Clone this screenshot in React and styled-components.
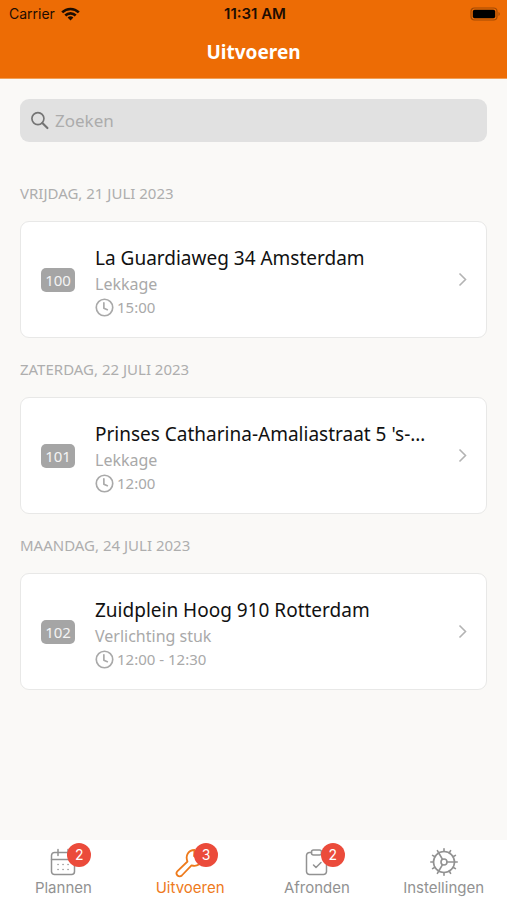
import React from 'react'
import styled, { createGlobalStyle } from 'styled-components'

const GlobalStyle = createGlobalStyle`
  * {
    box-sizing: border-box;
  }

  body {
    margin: 0;
    background: #faf9f7;
    font-family: "Noto Sans", "Open Sans", sans-serif;
  }
`;

const Screen = styled.div`
  display: flex;
  flex-direction: column;
  min-height: 100vh;
`;

const Header = styled.header`
  background: #ed6c05;
  border-bottom: 1px solid #f0a058;
`;

const StatusBar = styled.div`
  display: grid;
  grid-template-columns: 1fr auto 1fr;
  align-items: center;
  height: 27px;
  padding: 0 6px 0 9px;
  font-family: Inter, sans-serif;
  font-size: 14px;
  color: #1d0d02;
`;

const Carrier = styled.div`
  display: flex;
  align-items: center;
  gap: 6px;
`;

const Clock = styled.div`
  font-size: 15px;
  font-weight: 600;
`;

const Battery = styled.svg`
  justify-self: end;
`;

const Title = styled.h1`
  margin: 0;
  font-size: 19px;
  font-weight: 700;
  line-height: 51px;
  text-align: center;
  color: #fff;
`;

const Main = styled.main`
  flex: 1;
  padding: 20px;
`;

const SearchBox = styled.label`
  display: flex;
  align-items: center;
  gap: 6px;
  height: 43px;
  margin-bottom: 20px;
  padding: 0 10px;
  border-radius: 9px;
  background: #e1e1e1;
  color: #747474;
`;

const SearchInput = styled.input`
  flex: 1;
  min-width: 0;
  padding: 0;
  border: 0;
  outline: 0;
  background: none;
  font-family: inherit;
  font-size: 17px;
  color: #333;

  &::placeholder {
    color: #acacac;
    opacity: 1;
  }
`;

const DayTitle = styled.h2`
  margin: 0;
  padding: 21px 0 18px;
  font-size: 15px;
  font-weight: 400;
  line-height: 20px;
  text-transform: uppercase;
  color: #aeaeae;
`;

const Card = styled.a`
  display: flex;
  align-items: center;
  gap: 20px;
  padding: 18px 19px 18px 20px;
  border: 1px solid #e8e8e7;
  border-radius: 9px;
  background: #fff;
  text-decoration: none;
  color: #a9a9a9;
`;

const Number = styled.span`
  width: 34px;
  border-radius: 5px;
  background: #a5a5a5;
  font-size: 15px;
  line-height: 24px;
  text-align: center;
  color: #f4f4f4;
`;

const Details = styled.div`
  flex: 1;
  min-width: 0;
  padding-top: 4px;
`;

const Address = styled.div`
  font-size: 19px;
  line-height: 28px;
  color: #111;
`;

const Description = styled.div`
  font-size: 16px;
  line-height: 24px;
`;

const Time = styled.div`
  display: flex;
  align-items: center;
  gap: 3px;
  font-size: 15px;
  line-height: 23px;
`;

const TabBar = styled.nav`
  display: grid;
  grid-template-columns: repeat(4, 1fr);
  height: 60px;
  background: #fff;
`;

const Tab = styled.a`
  display: flex;
  flex-direction: column;
  align-items: center;
  padding-top: 8px;
  font-family: Inter, sans-serif;
  font-size: 15px;
  line-height: 20px;
  text-decoration: none;
  color: ${(props) => (props.$active ? '#ee7a1b' : '#929292')};
`;

const IconWrap = styled.span`
  position: relative;
  height: 30px;
`;

const Badge = styled.span`
  position: absolute;
  top: -5px;
  right: -13px;
  width: 24px;
  border-radius: 50%;
  background: #eb4b3b;
  font-size: 14px;
  line-height: 24px;
  text-align: center;
  color: #fff;
`;

const Icon = ({ size = 30, width = 1.5, children }) => (
  <svg
    width={size}
    height={size}
    viewBox="0 0 30 30"
    fill="none"
    stroke="currentColor"
    strokeWidth={width}
    strokeLinecap="round"
    strokeLinejoin="round"
    aria-hidden="true"
  >
    {children}
  </svg>
)

const CalendarIcon = () => (
  <Icon>
    <rect x="3.5" y="4.5" width="23" height="22" rx="3" />
    <path d="M3.5 11.5h23M10 1.500v6M20 1.500v6" />
    <path d="M10 16.5h.1M15 16.5h.1M20 16.5h.1M10 21.5h.1M15 21.5h.1M20 21.5h.1" />
  </Icon>
)

const WrenchIcon = () => (
  <Icon width={1.8}>
    <path d="M12.5 13.5 2.5 23.2a3 3 0 0 0 4.300 4.300L16.500 17.300c5.500 1.800 10.500-1.300 11-7L23 11l-4-3 .5-6c-6 0-9.500 5.500-7 11.500z" />
  </Icon>
)

const ClipboardIcon = () => (
  <Icon>
    <path d="M9.5 4.5h-2a3 3 0 0 0-3 3v16a3 3 0 0 0 3 3h14a3 3 0 0 0 3-3v-16a3 3 0 0 0-3-3h-2" />
    <rect x="9.5" y="2" width="10" height="5" rx="2" />
    <path d="m11.5 17 2.500 2.500 5-5" />
  </Icon>
)

const GearIcon = () => (
  <Icon width={1.6}>
    <circle cx="15" cy="14" r="10.5" />
    <circle cx="15" cy="14" r="3" />
    <path d="M18 14h7.500M13.500 11.400 9.800 5M13.500 16.600 9.800 23" />
    {[...Array(12)].map((_, i) => (
      <path key={i} d="M15 3.500V.8" transform={`rotate(${i * 30} 15 14)`} />
    ))}
  </Icon>
)

const ClockIcon = () => (
  <Icon size={19} width={2.6}>
    <circle cx="15" cy="15" r="13" />
    <path d="M14 7.5V16l5.500 2.500" />
  </Icon>
)

const SearchIcon = () => (
  <Icon size={19} width={2.6}>
    <circle cx="12.5" cy="12" r="9.5" />
    <path strokeWidth="3.4" d="m19.5 19 8 8" />
  </Icon>
)

const WifiIcon = () => (
  <svg width="19" height="14" viewBox="0 0 19 14" aria-hidden="true">
    <path fill="none" stroke="currentColor" strokeWidth="2.6" d="M1.2 5.4a11.800 11.800 0 0 1 16.600 0M4.300 8.500a7.400 7.400 0 0 1 10.400 0" />
    <path fill="currentColor" d="M9.5 13.5 6.6 10.600a4.200 4.200 0 0 1 5.800 0z" />
  </svg>
)

const ChevronIcon = () => (
  <svg width="9" height="15" viewBox="0 0 9 15" fill="none" stroke="#b3b3b3" strokeWidth="1.6" aria-hidden="true">
    <path d="m1.500 1.500 6 6-6 6" />
  </svg>
)

const days = [
  { date: 'Vrijdag, 21 juli 2023', number: 100, address: 'La Guardiaweg 34 Amsterdam', description: 'Lekkage', time: '15:00' },
  { date: 'Zaterdag, 22 juli 2023', number: 101, address: "Prinses Catharina-Amaliastraat 5 's-…", description: 'Lekkage', time: '12:00' },
  { date: 'Maandag, 24 juli 2023', number: 102, address: 'Zuidplein Hoog 910 Rotterdam', description: 'Verlichting stuk', time: '12:00 - 12:30' },
]

const tabs = [
  { label: 'Plannen', icon: CalendarIcon, count: 2 },
  { label: 'Uitvoeren', icon: WrenchIcon, count: 3, active: true },
  { label: 'Afronden', icon: ClipboardIcon, count: 2 },
  { label: 'Instellingen', icon: GearIcon },
]

export default function App() {
  return (
    <Screen>
      <GlobalStyle />
      <Header>
        <StatusBar>
          <Carrier>
            Carrier
            <WifiIcon />
          </Carrier>
          <Clock>11:31 AM</Clock>
          <Battery width="31" height="14" viewBox="0 0 31 14" aria-hidden="true">
            <rect x="1" y="1" width="26" height="12" rx="3.5" fill="none" stroke="#a34a05" strokeWidth="1.2" />
            <rect x="2.8" y="2.8" width="22.4" height="8.4" rx="1.8" fill="#000" />
            <path d="M28.5 5v4a2.200 2.200 0 0 0 0-4z" fill="#a34a05" />
          </Battery>
        </StatusBar>
        <Title>Uitvoeren</Title>
      </Header>

      <Main>
        <SearchBox>
          <SearchIcon />
          <SearchInput type="search" placeholder="Zoeken" aria-label="Zoeken" />
        </SearchBox>

        {days.map((day) => (
          <section key={day.number}>
            <DayTitle>{day.date}</DayTitle>
            <Card href="#">
              <Number>{day.number}</Number>
              <Details>
                <Address>{day.address}</Address>
                <Description>{day.description}</Description>
                <Time>
                  <ClockIcon />
                  {day.time}
                </Time>
              </Details>
              <ChevronIcon />
            </Card>
          </section>
        ))}
      </Main>

      <TabBar>
        {tabs.map(({ label, icon: TabIcon, count, active }) => (
          <Tab key={label} href="#" $active={active}>
            <IconWrap>
              <TabIcon />
              {count && <Badge>{count}</Badge>}
            </IconWrap>
            {label}
          </Tab>
        ))}
      </TabBar>
    </Screen>
  )
}
